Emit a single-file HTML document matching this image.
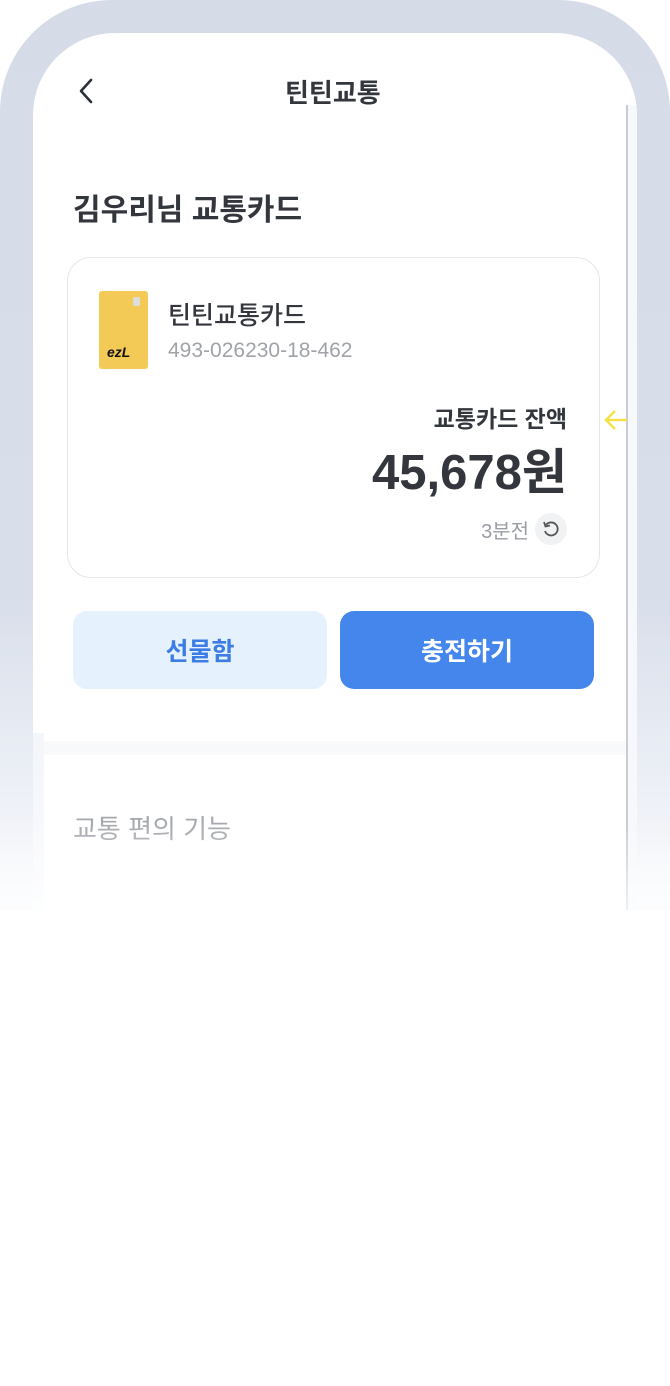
<!DOCTYPE html>
<html><head><meta charset="utf-8"><style>
*{margin:0;padding:0;box-sizing:border-box}
body{width:670px;height:1386px;background:#fff;position:relative;overflow:hidden;font-family:"Liberation Sans","Noto Sans CJK KR",sans-serif}
.frame{position:absolute;left:0;top:0;width:670px;height:910px;border-radius:112px 112px 0 0;background:linear-gradient(#d5dce8 0%,#d8deea 65%,#eef1f7 88%,#f9fafc 100%);overflow:hidden}
.screen{position:absolute;left:33px;top:33px;width:604px;height:877px;border-radius:82px 82px 0 0;background:#fff;overflow:hidden}
.lstrip{position:absolute;left:0;top:700px;width:11px;height:177px;background:linear-gradient(#f3f6fa,#fafbfd)}
.rline{position:absolute;left:593px;top:72px;width:2px;height:805px;background:#c9ccd2}
.rside{position:absolute;left:595px;top:72px;width:9px;height:805px;background:#f6f8fb}
.t{position:absolute;white-space:nowrap}
.card{position:absolute;left:34px;top:224px;width:533px;height:321px;border:1.5px solid #e4e6ea;border-radius:24px}
.btn{position:absolute;top:578px;width:254px;height:78px;border-radius:14px;font-size:25px;font-weight:bold;display:flex;align-items:center;justify-content:center}
.gap{position:absolute;left:11px;top:708px;width:582px;height:14px;background:#f8f9fa}
.fade{position:absolute;left:0;top:820px;width:670px;height:90px;background:linear-gradient(rgba(255,255,255,0),rgba(255,255,255,.7))}
</style></head><body>
<div class="frame">
<div class="screen">
<div class="lstrip"></div>
<div class="rside"></div>
<div class="rline"></div>
<svg class="t" style="left:44px;top:45px" width="20" height="26" viewBox="0 0 20 26"><path d="M14 2 L4 13 L14 24" stroke="#2b2f36" stroke-width="2.6" fill="none" stroke-linecap="round" stroke-linejoin="round"/></svg>
<div class="t" style="left:252px;top:40px;font-size:26px;font-weight:bold;color:#33363c">틴틴교통</div>
<div class="t" style="left:40px;top:152px;font-size:30px;font-weight:bold;color:#33363c">김우리님 교통카드</div>
<div class="card"></div>
<div class="t" style="left:66px;top:258px;width:49px;height:78px;background:#f2ca55;border-radius:3px">
<div style="position:absolute;left:34px;top:6px;width:7px;height:9px;background:#ddd;border-radius:2px"></div>
<div style="position:absolute;left:8px;top:53px;font-size:14px;font-weight:bold;font-style:italic;color:#111">ezL</div></div>
<div class="t" style="left:135px;top:263px;font-size:25px;color:#33363c;font-weight:500">틴틴교통카드</div>
<div class="t" style="left:135px;top:306px;font-size:21px;color:#a0a3a8">493-026230-18-462</div>
<div class="t" style="right:70px;top:367px;font-size:23px;font-weight:bold;color:#33363c">교통카드 잔액</div>
<div class="t" style="right:70px;top:400px;font-size:49px;font-weight:bold;color:#33363c">45,678원</div>
<div class="t" style="right:108px;top:482px;font-size:20px;color:#9a9da3">3분전</div>
<div class="t" style="left:502px;top:480px;width:32px;height:32px;border-radius:50%;background:#f1f2f4"><svg width="32" height="32" viewBox="0 0 32 32"><path d="M11 12 A6.5 6.5 0 1 1 10 18" stroke="#555" stroke-width="1.8" fill="none"/><path d="M9 9 L10.5 13.5 L15 12.5" stroke="#555" stroke-width="1.8" fill="none"/></svg></div>
<svg class="t" style="left:570px;top:373px" width="26" height="28" viewBox="0 0 26 28"><path d="M24 14 H4 M12 5 L3 14 L12 23" stroke="#f4e14a" stroke-width="2.5" fill="none"/></svg>
<div class="btn" style="left:40px;background:#e5f2fd;color:#3b7de4">선물함</div>
<div class="btn" style="left:307px;background:#4586ec;color:#fff">충전하기</div>
<div class="gap"></div>
<div class="t" style="left:40px;top:776px;font-size:26px;color:#a5a8ad">교통 편의 기능</div>
</div>
<div class="fade"></div>
</div>
</body></html>
